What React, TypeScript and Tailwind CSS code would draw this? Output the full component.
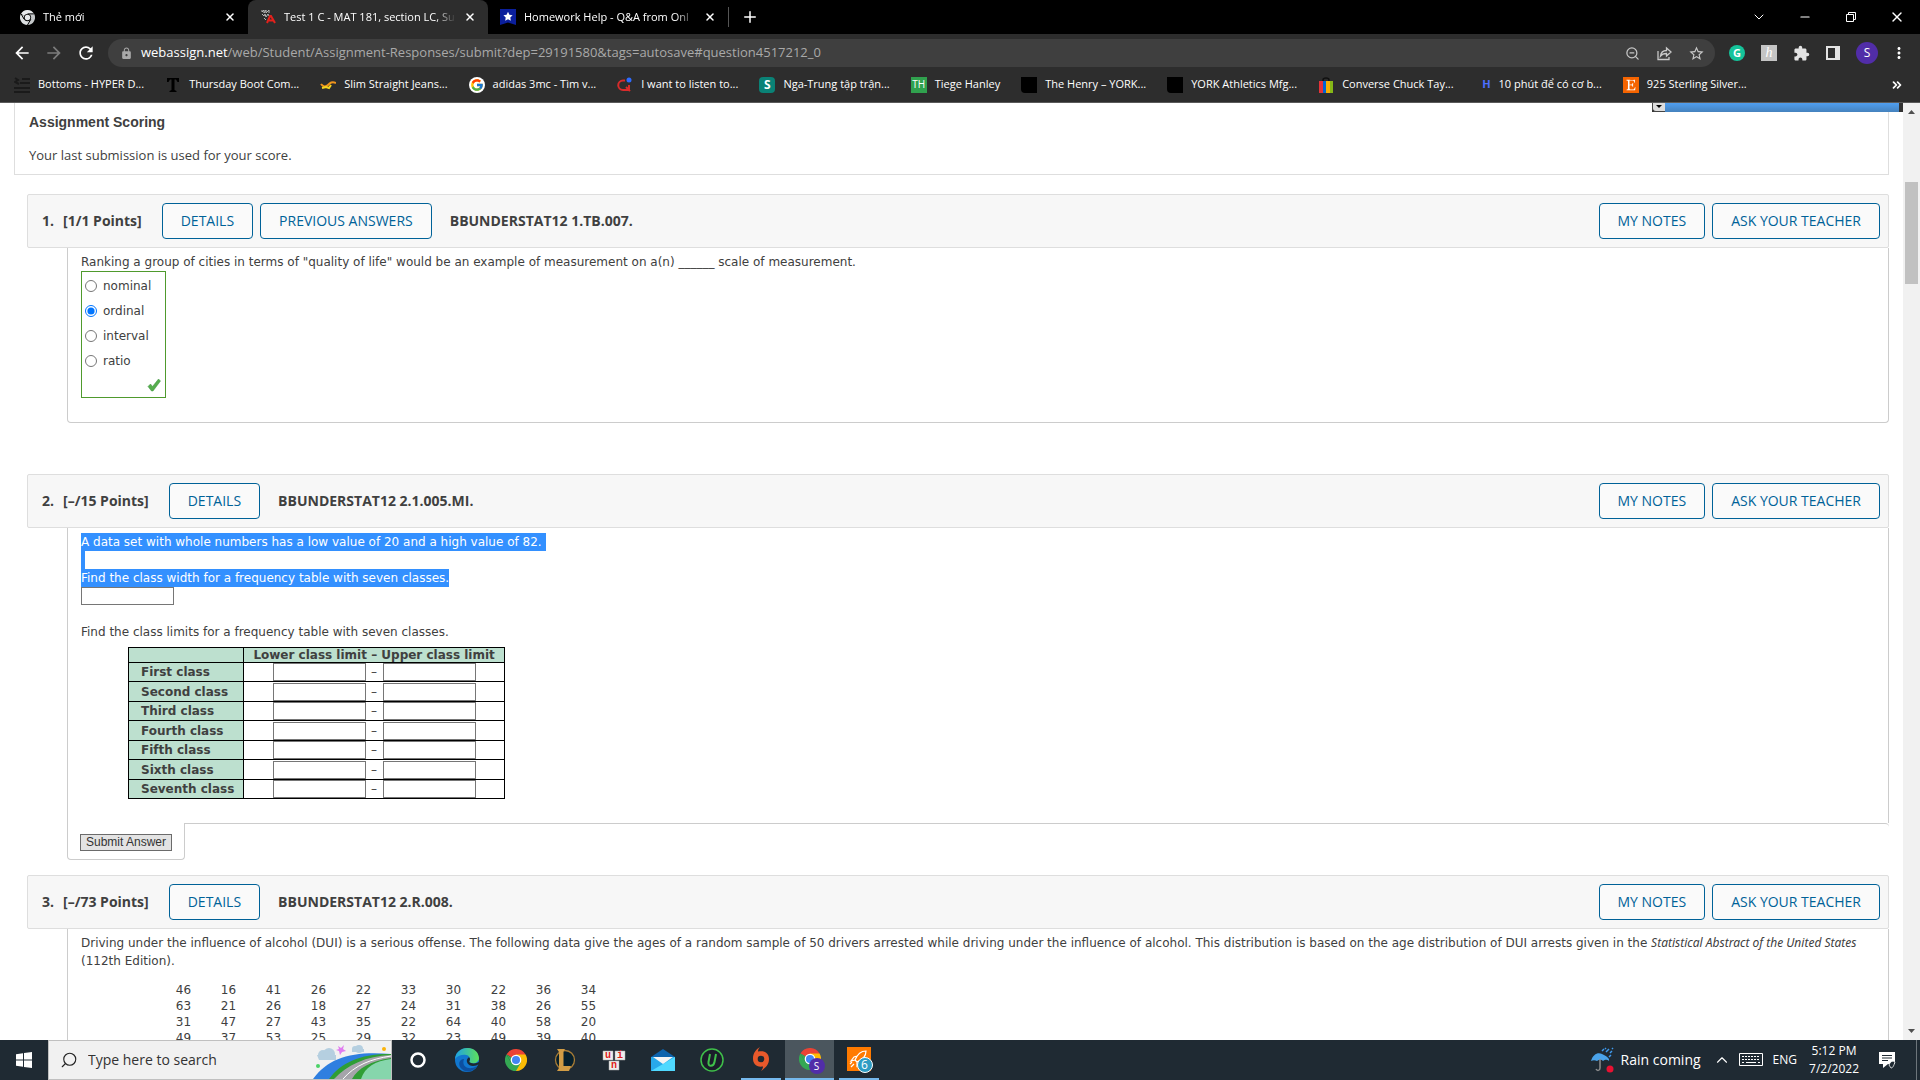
import type { ReactNode } from "react"
import { FcGoogle } from "react-icons/fc"
import { FaEtsy } from "react-icons/fa"
import {
  MdArrowBack,
  MdArrowForward,
  MdExtension,
  MdLock,
  MdMoreVert,
  MdRefresh,
  MdStarBorder,
} from "react-icons/md"
import { ChevronDown, ChevronUp, ChevronsRight, Minus, Plus, Search, X, ZoomOut } from "lucide-react"

const classNames = ["First", "Second", "Third", "Fourth", "Fifth", "Sixth", "Seventh"]

const ages = [
  [46, 16, 41, 26, 22, 33, 30, 22, 36, 34],
  [63, 21, 26, 18, 27, 24, 31, 38, 26, 55],
  [31, 47, 27, 43, 35, 22, 64, 40, 58, 20],
  [49, 37, 53, 25, 29, 32, 23, 49, 39, 40],
]

function ChromeLogo({ size = 24, mono = false }: { size?: number; mono?: boolean }) {
  const c = mono ? ["#e8eaed", "#c4c7c9", "#dcdfe1"] : ["#ea4335", "#fbbc05", "#34a853"]
  return (
    <svg width={size} height={size} viewBox="0 0 24 24">
      <path d="M12 12 1.6 6A12 12 0 0 1 22.4 6Z" fill={c[0]} />
      <path d="M12 12V6h10.4A12 12 0 0 1 12 24Z" fill={c[1]} />
      <path d="M12 12 17.2 15 12 24A12 12 0 0 1 1.6 6L6.8 15Z" fill={c[2]} />
      <path d="M12 12 1.6 6 6.8 15Z" fill={c[2]} />
      {mono && <path d="M12 6.2h10.2M17.2 15 12 24M6.8 15 1.6 6" stroke="#000" strokeWidth="1.6" />}
      <circle cx="12" cy="12" r="5.8" fill={mono ? "#000" : "#fff"} />
      <circle cx="12" cy="12" r="4.4" fill={mono ? "#e8eaed" : "#4285f4"} />
    </svg>
  )
}

function WebAssignIcon() {
  return (
    <svg width="16" height="16" viewBox="0 0 16 16" fill="none">
      <path d="M2 1v2l2-2v3l2-3v3l3-3v3M2 5l2 2 1-2 1 3 2-3 1 2M4 9l2 2" stroke="#b5b5b5" strokeWidth="1" />
      <path d="m7 14 3-7h1l4 7M9 11.5h5" stroke="#e3211c" strokeWidth="2" />
    </svg>
  )
}

function BadgeIcon() {
  return (
    <svg width="16" height="16" viewBox="0 0 16 16">
      <path d="M0 0h16v16l-8-2.5L0 16Z" fill="#0b1f9c" />
      <path d="m8 2.8 1.4 3 3.2.4-2.3 2.3.5 3.3L8 10.2l-2.8 1.6.5-3.3-2.3-2.3 3.2-.4Z" fill="#fff" />
    </svg>
  )
}

const bookmarks: { label: string; icon: ReactNode }[] = [
  {
    label: "Bottoms - HYPER D...",
    icon: (
      <svg width="16" height="16" viewBox="0 0 16 16" stroke="#1a1a1a" strokeWidth="2" fill="none">
        <path d="M0 15h16M0 11h16M6 6h10M8 2h8M1 1l3 2-3 2 4 2" />
      </svg>
    ),
  },
  {
    label: "Thursday Boot Com...",
    icon: (
      <svg width="16" height="16" viewBox="0 0 16 16" fill="#000">
        <path d="M2 1h12v4h-1.5L11 2.5H9.5V13l2 1v1h-7v-1l2-1V2.5H5L3.5 5H2Z" />
      </svg>
    ),
  },
  {
    label: "Slim Straight Jeans...",
    icon: (
      <svg width="16" height="16" viewBox="0 0 16 16" fill="none">
        <path d="M1 7c2 3 5 3 7 1s4-4 8-2" stroke="#f0941c" strokeWidth="2" />
        <path d="m2 11 4-1 3 1 2-3" stroke="#f6d51f" strokeWidth="2" />
      </svg>
    ),
  },
  {
    label: "adidas 3mc - Tìm v...",
    icon: (
      <span className="flex size-4 items-center justify-center rounded-full bg-white">
        <FcGoogle size={14} />
      </span>
    ),
  },
  {
    label: "I want to listen to...",
    icon: (
      <svg width="16" height="16" viewBox="0 0 16 16" fill="none">
        <path d="M8 3.5H6A4.5 4.5 0 0 0 6 13h6V8M9 10l4 4" stroke="#d92b2b" strokeWidth="2" />
        <circle cx="12" cy="3" r="2.5" fill="#2f6bff" />
      </svg>
    ),
  },
  { label: "Nga-Trung tập trận...", icon: <span className="flex size-4 items-center justify-center rounded-sm bg-[#0a8276] text-xs font-bold">S</span> },
  { label: "Tiege Hanley", icon: <span className="flex size-4 items-center justify-center bg-[#30a14e] text-[10px]">TH</span> },
  { label: "The Henry – YORK...", icon: <span className="size-4 rounded-bl bg-black" /> },
  { label: "YORK Athletics Mfg...", icon: <span className="size-4 rounded-bl bg-black" /> },
  {
    label: "Converse Chuck Tay...",
    icon: (
      <svg width="16" height="16" viewBox="0 0 16 16">
        <path d="M5 5V3a3 2 0 0 1 6 0v2" stroke="#111" strokeWidth="1.5" fill="none" />
        <path d="M1 4h4v12H1Z" fill="#e53238" />
        <path d="M5 4h3v12H5Z" fill="#0064d2" />
        <path d="M8 4h4v12H8Z" fill="#f5af02" />
        <path d="M12 4h3v12h-3Z" fill="#86b817" />
      </svg>
    ),
  },
  { label: "10 phút để có cơ b...", icon: <span className="flex size-4 items-center justify-end text-[11px] font-bold text-[#4c6fff]">H</span> },
  { label: "925 Sterling Silver...", icon: <span className="flex size-4 items-center justify-center bg-[#f56400]"><FaEtsy size={12} /></span> },
]

function Tab({ title, icon, active }: { title: string; icon: ReactNode; active?: boolean }) {
  return (
    <div className={active ? "flex h-full w-60 items-center gap-2 rounded-t-lg bg-[#2d2d2d] px-3" : "flex h-full w-60 items-center gap-2 px-3"}>
      <span className="shrink-0">{icon}</span>
      <span className="flex-1 overflow-hidden whitespace-nowrap [mask-image:linear-gradient(to_right,black_88%,transparent)]">
        {title}
      </span>
      <button aria-label="Close tab">
        <X size={12} strokeWidth={3} />
      </button>
    </div>
  )
}

function Browser() {
  return (
    <header className="shrink-0 border-b border-[#5a5a5a] bg-[#2d2d2d] font-['Open_Sans','Noto_Sans',sans-serif] text-[11px] text-white">
      <div className="flex h-[34px] items-center bg-black pl-2">
        <Tab title="Thẻ mới" icon={<ChromeLogo size={15} mono />} />
        <Tab title="Test 1 C - MAT 181, section LC, Su" icon={<WebAssignIcon />} active />
        <Tab title="Homework Help - Q&A from Onl" icon={<BadgeIcon />} />
        <span className="h-5 w-px bg-[#555]" />
        <button aria-label="New tab" className="ml-3">
          <Plus size={18} />
        </button>
        <div className="ml-auto flex">
          <button aria-label="Search tabs" className="flex h-7 w-[46px] items-center justify-center">
            <ChevronDown size={16} strokeWidth={1.5} />
          </button>
          <button aria-label="Minimize" className="flex h-7 w-[46px] items-center justify-center">
            <Minus size={14} strokeWidth={2} />
          </button>
          <button aria-label="Restore" className="flex h-7 w-[46px] items-center justify-center">
            <svg width="10" height="10" viewBox="0 0 10 10" fill="none" stroke="#fff">
              <path d="M.5 2.5h7v7h-7ZM2.5 2.5v-2h7v7h-2" />
            </svg>
          </button>
          <button aria-label="Close" className="flex h-7 w-[46px] items-center justify-center">
            <X size={16} strokeWidth={2} />
          </button>
        </div>
      </div>
      <div className="flex items-center px-3 pt-[5px]">
        <button aria-label="Back" className="w-8"><MdArrowBack size={20} /></button>
        <button aria-label="Forward" className="w-8 text-[#7c7c7c]"><MdArrowForward size={20} /></button>
        <button aria-label="Reload" className="w-8"><MdRefresh size={20} /></button>
        <div className="flex h-7 flex-1 items-center rounded-full bg-[#3f3f3f] pr-2.5 pl-3 text-[#a9a9a9]">
          <MdLock size={13} />
          <p className="ml-2 flex-1 text-[13px]">
            <span className="text-white">webassign.net</span>
            /web/Student/Assignment-Responses/submit?dep=29191580&tags=autosave#question4517212_0
          </p>
          <div className="flex items-center gap-4 text-[#c8c8c8]">
            <button aria-label="Zoom"><ZoomOut size={15} strokeWidth={2} /></button>
            <button aria-label="Share">
              <svg width="16" height="16" viewBox="0 0 16 16" fill="none" stroke="currentColor" strokeWidth="1.3">
                <path d="M2 6v8.5h11V12M4.5 11c.5-4 3-5.5 6-5.5V3L15 7l-4.5 4V8.5c-3 0-4.500.5-6 2.500Z" />
              </svg>
            </button>
            <button aria-label="Bookmark"><MdStarBorder size={17} /></button>
          </div>
        </div>
        <div className="flex items-center gap-4 pl-3.5">
          <span className="flex size-4 items-center justify-center rounded-full bg-[#15c39a] text-[11px] font-bold">G</span>
          <span className="flex size-4 items-center justify-center bg-[#c4c4c4] font-['Liberation_Serif',serif] text-sm italic">h</span>
          <MdExtension size={17} className="text-[#e3e3e3]" />
          <svg width="14" height="14" viewBox="0 0 14 14" fill="#e3e3e3">
            <path d="M0 0h14v14H0Zm2 2v10h7V2Z" fillRule="evenodd" />
          </svg>
          <span className="flex size-[22px] items-center justify-center rounded-full bg-[#512da8] text-xs">S</span>
          <button aria-label="Menu" className="-ml-1"><MdMoreVert size={18} /></button>
        </div>
      </div>
      <nav className="flex h-[35px] items-center gap-[21px] pr-4 pl-3.5 whitespace-nowrap">
        {bookmarks.map((b) => (
          <a key={b.label} href="#" className="flex items-center gap-2">
            {b.icon}
            {b.label}
          </a>
        ))}
        <ChevronsRight size={14} strokeWidth={3} className="ml-auto" />
      </nav>
    </header>
  )
}

function OutlineButton({ children }: { children: ReactNode }) {
  return (
    <button className="h-9 rounded border border-[#006298] bg-white/40 px-[18px] text-sm font-medium whitespace-nowrap text-[#006298]">
      {children}
    </button>
  )
}

function QuestionHeader({ n, points, name, previous }: { n: number; points: string; name: string; previous?: boolean }) {
  return (
    <div className="ml-[27px] flex items-center justify-between rounded-xs border border-[#dedede] bg-[#f7f7f7] p-2 font-['Open_Sans',sans-serif] text-sm">
      <div className="flex items-center pl-1.5">
        <h2 className="flex gap-[9px] font-bold">
          <span>{n}.</span>
          <span>[{points} Points]</span>
        </h2>
        <div className="ml-5 flex gap-[7px]">
          <OutlineButton>DETAILS</OutlineButton>
          {previous && <OutlineButton>PREVIOUS ANSWERS</OutlineButton>}
        </div>
        <b className="ml-[18px]">{name}</b>
      </div>
      <div className="flex gap-[7px]">
        <OutlineButton>MY NOTES</OutlineButton>
        <OutlineButton>ASK YOUR TEACHER</OutlineButton>
      </div>
    </div>
  )
}

function QuestionOne() {
  return (
    <section>
      <QuestionHeader n={1} points="1/1" name="BBUNDERSTAT12 1.TB.007." previous />
      <div className="ml-[67px] rounded-b border border-t-0 border-[#ccc] px-[13px] pt-[5px] pb-6">
        <p>
          Ranking a group of cities in terms of "quality of life" would be an example of measurement on a(n) ______ scale of
          measurement.
        </p>
        <div className="inline-block border border-[#4f9a2d] pr-1 pl-[3px] pt-px align-top">
          {["nominal", "ordinal", "interval", "ratio"].map((option) => (
            <label key={option} className="flex h-[25px] items-center gap-1.5 pr-2.5">
              <input type="radio" name="scale" defaultChecked={option === "ordinal"} className="size-3 accent-[#0075ff]" />
              {option}
            </label>
          ))}
          <svg width="14" height="14" viewBox="0 0 14 14" className="my-[5px] ml-auto">
            <path d="M1 8.5 3.5 6 5.5 8.5 11.5 1 13.5 3 6 13H4.5Z" fill="#55ad4c" stroke="#3f9141" strokeWidth=".5" />
          </svg>
        </div>
      </div>
    </section>
  )
}

function QuestionTwo() {
  return (
    <section className="mt-[51px]">
      <QuestionHeader n={2} points="–/15" name="BBUNDERSTAT12 2.1.005.MI." />
      <div className="ml-[67px] border-x border-[#ccc] px-[13px] pt-[5px] pb-6">
        <div className="text-white">
          <p><span className="inline-block bg-[#3390ff] pr-1">A data set with whole numbers has a low value of 20 and a high value of 82.</span></p>
          <p className="h-[18px] w-1 bg-[#3390ff]" />
          <p><label htmlFor="width" className="inline-block bg-[#3390ff]">Find the class width for a frequency table with seven classes.</label></p>
        </div>
        <input id="width" type="text" className="block h-[18px] w-[93px] border border-[#767676] bg-white" />
        <p className="mt-[18px]">Find the class limits for a frequency table with seven classes.</p>
        <table className="mt-1.5 ml-[47px] border-collapse border border-black">
          <thead>
            <tr className="bg-[#bde0cf] leading-[14px]">
              <th className="border border-black" />
              <th className="border border-black px-[9px] py-0">Lower class limit – Upper class limit</th>
            </tr>
          </thead>
          <tbody>
            {classNames.map((c) => (
              <tr key={c} className="even:h-5">
                <th className="border border-black bg-[#bde0cf] py-0 pr-[9px] pl-3 text-left">{c} class</th>
                <td className="border border-black p-0">
                  <div className="flex items-center justify-center">
                    <input aria-label={`${c} class lower limit`} className="h-[18px] w-[93px] border border-[#767676]" />
                    <span className="w-[17px] text-center">–</span>
                    <input aria-label={`${c} class upper limit`} className="h-[18px] w-[93px] border border-[#767676]" />
                  </div>
                </td>
              </tr>
            ))}
          </tbody>
        </table>
      </div>
      <div className="ml-[67px] flex">
        <div className="rounded-b border border-t-0 border-[#ccc] px-3 pt-[11px] pb-2">
          <button className="block h-[17px] border border-[#6b6b6b] bg-[#e3e3e3] px-[5px] font-['Liberation_Sans',sans-serif] text-xs leading-[15px] text-[#333]">
            Submit Answer
          </button>
        </div>
        <div className="h-2 flex-1 rounded-tr border-t border-[#ccc]" />
      </div>
    </section>
  )
}

function QuestionThree() {
  return (
    <section className="mt-[15px]">
      <QuestionHeader n={3} points="–/73" name="BBUNDERSTAT12 2.R.008." />
      <div className="ml-[67px] border border-t-0 border-[#ccc] pt-[5px] pb-6 pl-[13px]">
        <p>
          Driving under the influence of alcohol (DUI) is a serious offense. The following data give the ages of a random sample
          of 50 drivers arrested while driving under the influence of alcohol. This distribution is based on the age
          distribution of DUI arrests given in the{" "}
          <i className="font-['Noto_Sans',sans-serif]">Statistical Abstract of the United States</i> (112th Edition).
        </p>
        <table className="mt-3 ml-20 text-center leading-4">
          <tbody>
            {ages.map((row, r) => (
              <tr key={r}>
                {row.map((age, i) => (
                  <td key={i} className="w-[45px] p-0">{age}</td>
                ))}
              </tr>
            ))}
          </tbody>
        </table>
      </div>
    </section>
  )
}

function Scrollbar() {
  return (
    <div className="flex w-[17px] shrink-0 flex-col items-center bg-[#f1f1f1]">
      <svg width="17" height="17" viewBox="0 0 17 17" fill="#505050"><path d="m5 11 3.5-4 3.5 4Z" /></svg>
      <div className="mt-[62px] h-[102px] w-[13px] bg-[#c1c1c1]" />
      <svg width="17" height="17" viewBox="0 0 17 17" fill="#505050" className="mt-auto"><path d="m5 6 3.5 4L12 6Z" /></svg>
    </div>
  )
}

function SearchArt() {
  return (
    <svg width="80" height="38" viewBox="0 0 80 38" className="ml-auto">
      <path d="M2 38C18 16 42 10 80 13v25Z" fill="#2f7fe0" />
      <path d="M18 38C30 21 52 12 80 13v25Z" fill="#2f9e35" />
      <path d="M50 38c4-12 14-18 30-20v20Z" fill="#86d6ac" />
      <path d="M23 38C36 24 55 15 80 14v3C60 20 47 27 41 38Z" fill="#a5a4aa" />
      <path d="M32 38C44 24 60 18 80 15" stroke="#fff" fill="none" />
      <g fill="#b5cfe0">
        <circle cx="12" cy="14" r="5" /><circle cx="18" cy="13" r="6" /><path d="M6 14h19v5H8Z" />
        <circle cx="44" cy="8" r="3" /><circle cx="48" cy="8" r="4" /><path d="M41 8h12v3H41Z" />
      </g>
      <path d="m27 5 3 2 3-3-1 4 3 2-4 1-2 3-1-4-3-1 3-1Z" fill="#e07bf0" />
      <circle cx="73" cy="8" r="2" fill="#fcb40a" />
      <circle cx="7" cy="25" r="2" fill="#4bd267" />
    </svg>
  )
}

const apps: { name: string; icon: ReactNode; open?: boolean; active?: boolean }[] = [
  {
    name: "Cortana",
    icon: (
      <svg width="24" height="24" viewBox="0 0 24 24">
        <circle cx="12" cy="12" r="6.5" fill="none" stroke="#fff" strokeWidth="2.5" />
      </svg>
    ),
  },
  {
    name: "Edge",
    icon: (
      <svg width="24" height="24" viewBox="0 0 24 24">
        <defs>
          <linearGradient id="edgeTop" x1="0" x2="1">
            <stop stopColor="#1da1e6" />
            <stop offset="1" stopColor="#5ee05a" />
          </linearGradient>
        </defs>
        <circle cx="12" cy="12" r="12" fill="#1177cf" />
        <path d="M0 11C1-3 23-4 24 10c0 4-4 6-8 5-3-1-1-2-1-4 0-5-10-6-15 0Z" fill="url(#edgeTop)" />
        <path d="M9 11c-3 8 5 12 13 7-3 6-12 8-17 1-2-4 0-8 4-8Z" fill="#0c4fa0" />
        <path d="M13 10c-3 3 0 8 5 8 3 0 4-1 6-2v-2c-2 1-5 2-8 1-3-1-1-2-1-4 0-1-1-2-2-1Z" fill="#1d2830" />
      </svg>
    ),
  },
  { name: "Chrome", icon: <ChromeLogo size={22} /> },
  {
    name: "League of Legends",
    icon: (
      <svg width="24" height="24" viewBox="0 0 24 24">
        <circle cx="12" cy="12" r="9.5" fill="#07202c" stroke="#a97c35" strokeWidth="1.3" />
        <path d="M4 1h8l-1.5 2.5V18H18l-2 5H4l2-3V4Z" fill="#d19c45" />
      </svg>
    ),
  },
  {
    name: "UniKey",
    icon: (
      <svg width="24" height="24" viewBox="0 0 24 24" fontFamily="Liberation Mono, monospace" fontSize="10" fontWeight="700">
        <path d="M1 3h10v9H1ZM13 3h10v9H13ZM7 13h10v9H7Z" fill="#eee" stroke="#aaa" strokeWidth=".5" />
        <g fill="#e02020"><text x="3" y="10">u</text><text x="15" y="10">i</text><text x="9" y="20">n</text></g>
      </svg>
    ),
  },
  {
    name: "Mail",
    icon: (
      <svg width="24" height="24" viewBox="0 0 24 24">
        <path d="m0 9 12-8 12 8Z" fill="#0d63ad" />
        <path d="M0 9h24v14H0Z" fill="#28a8ea" />
        <path d="M0 23 24 9v14Z" fill="#50d9ff" />
        <path d="M2 9h20l-10 7Z" fill="#f4f4f4" />
      </svg>
    ),
  },
  {
    name: "Uninstaller",
    icon: (
      <svg width="24" height="24" viewBox="0 0 24 24" fill="none" stroke="#3fbf4a">
        <circle cx="12" cy="12" r="11" fill="#1b1d2a" strokeWidth="1.5" />
        <path d="M10 6 8.5 14c-.8 5 5 5 6 0L16 6" strokeWidth="2" />
      </svg>
    ),
  },
  {
    name: "Origin",
    open: true,
    icon: (
      <svg width="24" height="24" viewBox="0 0 24 24">
        <path
          d="M11 0C9.500 1.500 9 3 9 4.500c7-1.500 11 2 11 7.500 0 6-4 9-8 12 1.500-2 2-3 2-4.500-7 1-10-3-10-8C4 6 7 2.500 11 0Z"
          fill="#e8592b"
        />
        <circle cx="12" cy="12" r="3.3" fill="#1d2830" />
      </svg>
    ),
  },
  {
    name: "Chrome profile",
    open: true,
    active: true,
    icon: (
      <span className="relative">
        <ChromeLogo size={22} />
        <span className="absolute top-2.5 left-2.5 flex size-4 items-center justify-center rounded-full bg-[#512da8] text-[10px]">S</span>
      </span>
    ),
  },
  {
    name: "Launcher",
    open: true,
    icon: (
      <span className="relative">
        <svg width="24" height="24" viewBox="0 0 24 24">
          <path d="M0 0h24v24H0Z" fill="#ff7a00" />
          <path d="M8 13c2-5 6-9 11-9 0 5-4 9-9 11ZM8 13l-4 1 3-4 3-1M10 15v4l3-3 1-3M4 20l3-3M3 17l2-2" fill="none" stroke="#fff" strokeWidth="1.2" />
        </svg>
        <span className="absolute top-2.5 left-2.5 flex size-4 items-center justify-center rounded-full border border-white bg-[#2e9cc4] text-xs">6</span>
      </span>
    ),
  },
]

function Taskbar() {
  return (
    <footer className="flex h-10 shrink-0 items-center bg-[#1f2a33] font-['Open_Sans',sans-serif] text-white">
      <button aria-label="Start" className="flex w-12 justify-center">
        <svg width="16" height="16" viewBox="0 0 16 16" fill="#fff">
          <path d="M0 2.200 7 1.200v6.300H0ZM8 1l8-1v7.500H8ZM0 8.500h7v6.300l-7-1ZM8 8.500h8V16l-8-1Z" />
        </svg>
      </button>
      <label className="flex h-full w-[344px] items-center overflow-hidden border border-[#c0c0c0] bg-[#f1f1f1] pl-[11px]">
        <Search size={18} strokeWidth={1.5} className="-scale-x-100 text-[#222]" />
        <input type="text" placeholder="Type here to search" className="ml-2.5 w-[150px] text-sm placeholder:text-[#333]" />
        <SearchArt />
      </label>
      <div className="flex h-full pl-px">
        {apps.map((app) => (
          <button
            key={app.name}
            aria-label={app.name}
            className={app.active ? "flex h-full w-[49px] flex-col items-center bg-[#4b565e]" : "flex h-full w-[49px] flex-col items-center"}
          >
            <span className="flex flex-1 items-center">{app.icon}</span>
            {app.open && <span className={app.active ? "h-0.5 w-full bg-[#76b9ed]" : "h-0.5 w-10 bg-[#76b9ed]"} />}
          </button>
        ))}
      </div>
      <div className="ml-auto flex h-full items-center">
        <svg width="25" height="26" viewBox="0 0 25 26">
          <path d="M1 14C3 7 8 5 12 7s8 4 7 7c-3-2-4-1-6 0-2-2-4-1-6 0-2-1-4-1-6 0Z" fill="#4aa3ea" />
          <path d="M10 12v9c0 3-3 3-4 1" stroke="#8d8d8d" strokeWidth="1.5" fill="none" />
          <path d="m12 4 2-2M16 5l3-3M20 6l2-2M19 10l2-2M15 2l1-1M22 2l1-1" stroke="#3f9bef" strokeWidth="1.5" />
          <circle cx="20" cy="22" r="3.5" fill="#e81132" />
        </svg>
        <span className="ml-1.5 text-sm">Rain coming</span>
        <ChevronUp size={18} strokeWidth={1.5} className="ml-3" />
        <svg width="24" height="14" viewBox="0 0 24 14" className="ml-2" fill="none" stroke="#fff">
          <path d="M.5.5h23v12H.5Z" />
          <path d="M3 3.5h18M3 6.5h18" strokeDasharray="2 1" />
          <path d="M3 9.5h2M7 9.5h10M19 9.5h2" />
        </svg>
        <span className="ml-2.5 text-xs">ENG</span>
        <div className="ml-3 text-center text-xs leading-[18px]">
          <p>5:12 PM</p>
          <p>7/2/2022</p>
        </div>
        <svg width="17" height="17" viewBox="0 0 17 17" className="mr-5 ml-5">
          <path d="M0 0h16v12H9l-5 4v-4H0Z" fill="#fff" />
          <path d="M3 3.5h10M3 6h10M3 8.5h6" stroke="#1f2a33" />
          <path d="M10 13c2-5 5-4 6-3-1 3-2 6-4 6Z" fill="#1f2a33" stroke="#fff" strokeWidth=".8" />
        </svg>
        <span className="mr-[3px] h-full w-px bg-[#6d757b]" />
      </div>
    </footer>
  )
}

export default function App() {
  return (
    <div className="flex h-screen flex-col overflow-hidden">
      <Browser />
      <div className="flex min-h-0 flex-1 bg-white">
        <main className="relative min-w-0 flex-1 overflow-hidden pr-3.5 font-['DejaVu_Sans',sans-serif] text-xs leading-[18px] text-[#404040]">
          <section className="mb-[19px] ml-3.5 border border-t-0 border-[#dedede] px-3.5 pt-[9px] pb-2.5 font-['Open_Sans',sans-serif] text-[13px]">
            <h2 className="font-['Liberation_Sans',sans-serif] text-sm font-bold">Assignment Scoring</h2>
            <p className="mt-3.5">Your last submission is used for your score.</p>
          </section>
          <div className="absolute top-0 right-0 flex h-[9px] w-[251px] bg-[#333]">
            <button aria-label="Expand" className="flex w-[13px] justify-center rounded-bl border-b border-l border-[#444] bg-[#ddd]">
              <svg width="6" height="6" viewBox="0 0 6 6"><path d="M0 2h6L3 5Z" /></svg>
            </button>
            <div className="mr-1 flex-1 bg-linear-to-b from-[#4f9ef0] to-[#4582bd]" />
          </div>
          <QuestionOne />
          <QuestionTwo />
          <QuestionThree />
        </main>
        <Scrollbar />
      </div>
      <Taskbar />
    </div>
  )
}
